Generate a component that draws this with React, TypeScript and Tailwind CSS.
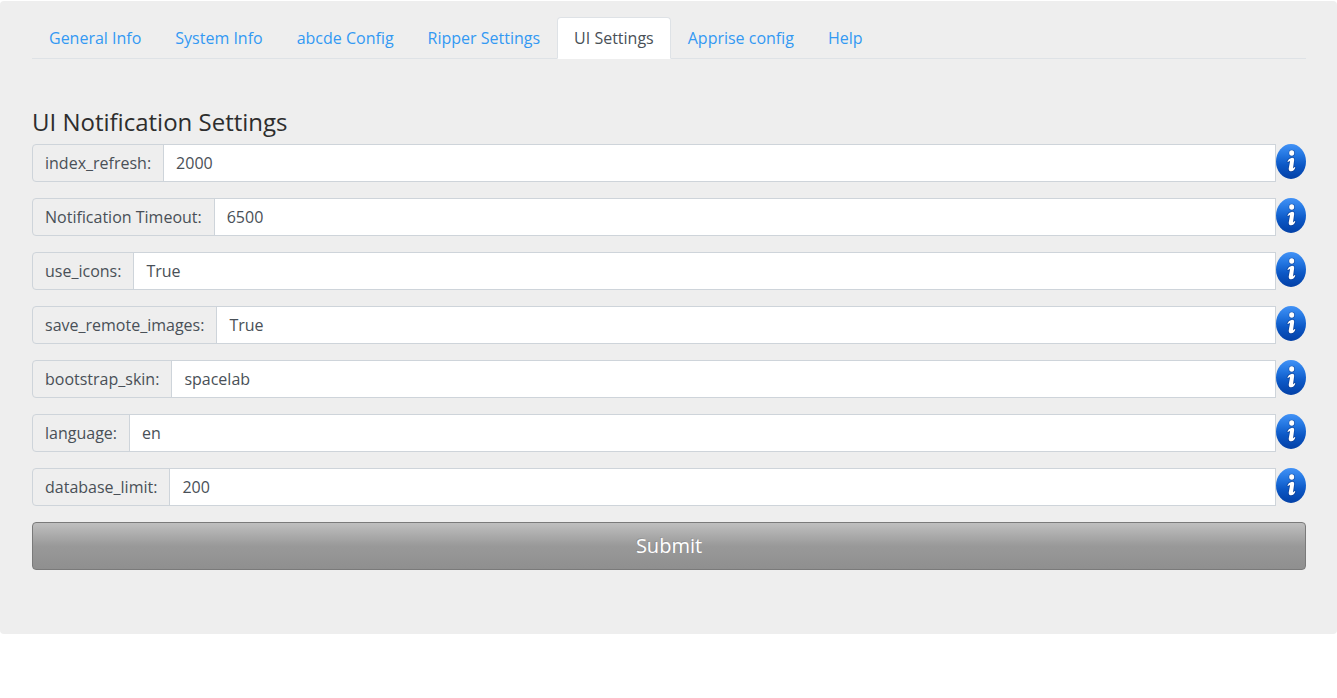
import { useId, useState } from "react";

const tabs = [
  "General Info",
  "System Info",
  "abcde Config",
  "Ripper Settings",
  "UI Settings",
  "Apprise config",
  "Help",
];

const settings = [
  { label: "index_refresh:", value: "2000" },
  { label: "Notification Timeout:", value: "6500" },
  { label: "use_icons:", value: "True" },
  { label: "save_remote_images:", value: "True" },
  { label: "bootstrap_skin:", value: "spacelab" },
  { label: "language:", value: "en" },
  { label: "database_limit:", value: "200" },
];

const stem =
  "M11.3 17.4Q12.6 14.3 16 13.8 18.4 13.7 18.2 15.8L17.2 22.9Q17 24.3 17.5 24.2 18 24 18.4 23L19.4 23.5Q18.2 27.1 15.2 27.3 12.6 27.2 12.7 24.4L13.9 18.2Q14.1 16.9 13.5 17 12.9 17.1 12.3 18.1Z";

function InfoIcon() {
  const id = useId();
  return (
    <svg
      className="h-[35px] w-[30px] shrink-0"
      viewBox="0 0 30 35"
      role="img"
      aria-label="Info"
    >
      <defs>
        <linearGradient id={id} x1="0" y1="0" x2="0" y2="1">
          <stop offset="0" stopColor="#4292f6" />
          <stop offset="0.3" stopColor="#2477e2" />
          <stop offset="0.6" stopColor="#0c58c6" />
          <stop offset="1" stopColor="#0340a6" />
        </linearGradient>
      </defs>
      <ellipse cx="15" cy="17.5" rx="15" ry="17.5" fill={`url(#${id})`} />
      <g fill="#0a2f78" stroke="#0a2f78" strokeWidth="1.4" opacity="0.5">
        <ellipse cx="15.8" cy="9.1" rx="2.5" ry="2.7" />
        <path d={stem} />
      </g>
      <g fill="#fff">
        <ellipse cx="15.7" cy="9" rx="2.5" ry="2.7" />
        <path d={stem} />
      </g>
    </svg>
  );
}

function SettingRow({ label, value }: { label: string; value: string }) {
  const id = useId();
  return (
    <div className="flex items-start">
      <label
        htmlFor={id}
        className="h-[38px] shrink-0 rounded-l border border-[#ced4da] bg-[#eee] px-3 py-1.5 leading-6"
      >
        {label}
      </label>
      <input
        id={id}
        type="text"
        defaultValue={value}
        className="-ml-px h-[38px] min-w-0 flex-1 border border-[#ced4da] bg-white px-3 py-1.5 leading-6 outline-none focus:border-[#446e9b]"
      />
      <InfoIcon />
    </div>
  );
}

export default function App() {
  const [active, setActive] = useState("UI Settings");
  return (
    <main className="mt-px rounded bg-[#eee] pt-4 pr-[31px] pb-16 pl-8 font-['Open_Sans',sans-serif] text-base text-[#495057]">
      <nav className="flex flex-wrap border-b border-[#dee2e6]">
        {tabs.map((tab) => (
          <a
            key={tab}
            href="#"
            onClick={(event) => {
              event.preventDefault();
              setActive(tab);
            }}
            aria-current={tab === active ? "page" : undefined}
            className={
              tab === active
                ? "-mb-px rounded-t border border-[#dee2e6] border-b-white bg-white px-4 py-2 leading-6 text-[#495057]"
                : "-mb-px rounded-t border border-transparent px-4 py-2 leading-6 text-[#3399f3]"
            }
          >
            {tab}
          </a>
        ))}
      </nav>
      <form className="pt-12" onSubmit={(event) => event.preventDefault()}>
        <h1 className="mb-2 text-2xl leading-[29px] text-[#2d2d2d]">
          UI Notification Settings
        </h1>
        <div className="flex flex-col gap-4">
          {settings.map((setting) => (
            <SettingRow key={setting.label} {...setting} />
          ))}
          <button
            type="submit"
            className="h-12 w-full rounded border border-[#7a7a7a] bg-linear-[180deg,#bfbfbf,#999_50%,#8f8f8f] text-xl leading-[30px] text-white text-shadow-[-1px_-1px_0_rgba(0,0,0,0.1)]"
          >
            Submit
          </button>
        </div>
      </form>
    </main>
  );
}
